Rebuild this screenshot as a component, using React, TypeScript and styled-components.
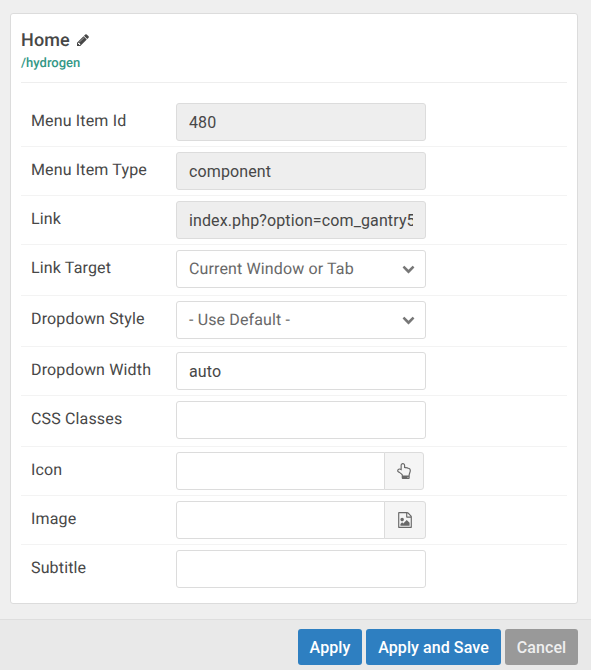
import React from "react";
import styled, { createGlobalStyle, css } from "styled-components";

const GlobalStyle = createGlobalStyle`
  *, *::before, *::after { box-sizing: border-box; }
  html, body { margin: 0; padding: 0; }
  body {
    background: #efefef;
    color: #474747;
    font-family: Roboto, "Liberation Sans", sans-serif;
    font-size: 16px;
    line-height: 24px;
    text-rendering: geometricPrecision;
  }
`;

const Modal = styled.div`
  display: flex;
  flex-direction: column;
  width: 591px;
  height: 670px;
  overflow: hidden;
`;

const Content = styled.main`
  height: 619px;
  padding: 13px 13px 0 10px;
`;

const Card = styled.section`
  height: 591px;
  padding: 0 10px;
  background: #fff;
  border: 1px solid #dcdcdc;
  border-radius: 3px;
`;

const CardHeader = styled.header`
  height: 69px;
  padding-top: 15px;
  border-bottom: 1px solid #eee;
`;

const Title = styled.h4`
  display: flex;
  align-items: center;
  gap: 6px;
  margin: 0;
  font-size: 18px;
  font-weight: 500;
  line-height: 24px;
  letter-spacing: 0.13px;
`;

const TitleEdit = styled.span`
  margin-bottom: 3px;
`;

const Path = styled.div`
  color: #349886;
  font-size: 13px;
  font-weight: 500;
  line-height: 20px;
  letter-spacing: 0;
  margin-top: 1px;
`;

const Glyph = styled.svg<{ $size: number }>`
  display: block;
  flex: none;
  width: ${(p) => p.$size}px;
  height: ${(p) => p.$size}px;
  fill: currentColor;
`;

const Form = styled.div`
  padding-top: 15px;
`;

const Row = styled.div<{ $tall?: boolean }>`
  display: flex;
  align-items: flex-start;
  height: ${(p) => (p.$tall ? 51 : 49)}px;
  padding: 5px 10px 0;
  border-bottom: 1px solid #f3f3f3;
  &:last-child { border-bottom: 0; }
`;

const Label = styled.label`
  width: 145px;
  padding-top: 6px;
  line-height: 24px;
  letter-spacing: 0.15px;
  white-space: nowrap;
`;

const control = css`
  height: 38px;
  border: 1px solid #dcdcdc;
  border-radius: 3px;
  background: #fff;
`;

const Input = styled.input`
  ${control}
  width: 250px;
  padding: 1px 12px 0;
  color: #474747;
  font: inherit;
  letter-spacing: 0.12px;
  outline: 0;
  &:disabled { background: #eee; }
`;

const Select = styled.div`
  ${control}
  display: flex;
  align-items: center;
  justify-content: space-between;
  width: 250px;
  padding: 0 10px 0 12px;
  color: #686868;
  letter-spacing: 0.13px;
`;

const Chevron = styled.span`
  color: #777;
  padding-bottom: 2px;
`;

const Group = styled.div`
  display: flex;
`;

const GroupInput = styled(Input)`
  width: 209px;
  border-radius: 3px 0 0 3px;
`;

const Addon = styled.button<{ $width: number }>`
  ${control}
  display: flex;
  align-items: center;
  justify-content: center;
  width: ${(p) => p.$width}px;
  margin-left: -1px;
  padding: 0;
  border-radius: 0 3px 3px 0;
  background: #f5f5f5;
  color: #686868;
`;

const Footer = styled.footer`
  display: flex;
  justify-content: flex-end;
  gap: 4px;
  height: 51px;
  padding: 9px 13px 0 0;
  background: #e9e9e9;
  border-top: 1px solid #dedede;
`;

const Button = styled.button<{ $width: number; $muted?: boolean }>`
  width: ${(p) => p.$width}px;
  height: 36px;
  padding: 2px 0 0;
  border: 0;
  border-radius: 3px;
  background: ${(p) => (p.$muted ? "#999" : "#2e7fc1")};
  color: ${(p) => (p.$muted ? "#efefef" : "#fff")};
  font: 500 16px/24px Roboto, "Liberation Sans", sans-serif;
  letter-spacing: 0.08px;
  white-space: nowrap;
`;

const paths = {
  pencil:
    "M491 1536l91-91-235-235-91 91v107h128v128h107zm523-928q0-22-22-22-10 0-17 7l-542 542q-7 7-7 17 0 22 22 22 10 0 17-7l542-542q7-7 7-17zm-54-192l416 416-832 832h-416v-416zm683 96q0 53-37 90l-166 166-416-416 166-165q36-38 90-38 53 0 91 38l235 234q37 39 37 91z",
  chevron:
    "M1683 808l-742 741q-19 19-45 19t-45-19l-742-741q-19-19-19-45.500t19-45.500l166-165q19-19 45-19t45 19l531 531 531-531q19-19 45-19t45 19l166 165q19 19 19 45.500t-19 45.500z",
  hand:
    "M1408 1600q0-26-19-45t-45-19-45 19-19 45 19 45 45 19 45-19 19-45zm128-764q0-189-167-189-26 0-56 5-16-30-52.500-47.500t-73.500-17.500-69 18q-50-53-119-53-25 0-55.500 10t-47.500 25v-331q0-52-38-90t-90-38q-51 0-89.500 39t-38.500 89v576q-20 0-48.500-15t-55-33-68-33-84.500-15q-67 0-97.500 44.500t-30.500 115.500q0 24 139 90 44 24 65 37 64 40 145 112 81 71 106 101 57 69 57 140v32h640v-32q0-72 32-167t64-193.500 32-179.500zm128-5q0 133-69 322-59 164-59 223v288q0 53-37.500 90.500t-90.500 37.500h-640q-53 0-90.500-37.500t-37.500-90.500v-288q0-10-4.500-21.500t-14-23.500-18-22.500-22.500-24-21.500-20.500-21.500-19-17-14q-74-65-129-100-21-13-62-33t-72-37-63-40.500-49.500-55-17.500-69.500q0-125 67-206.500t189-81.500q68 0 128 22v-374q0-104 76-180t179-76q105 0 181 75.500t76 180.500v169q62 4 119 37 21-3 43-3 101 0 178 60 139-1 219.500 85t80.500 227z",
  image:
    "M1596 380q28 28 48 76t20 88v1152q0 40-28 68t-68 28h-1344q-40 0-68-28t-28-68v-1600q0-40 28-68t68-28h896q40 0 88 20t76 48zm-444-244v376h376q-10-29-22-41l-313-313q-12-12-41-22zm384 1528v-1024h-416q-40 0-68-28t-28-68v-416h-768v1536h1280zm-128-448v320h-1024v-192l192-192 128 128 384-384zm-832-192q-80 0-136-56t-56-136 56-136 136-56 136 56 56 136-56 136-136 56z",
};

const Icon = ({ name, size }: { name: keyof typeof paths; size: number }) => (
  <Glyph $size={size} viewBox="0 0 1792 1792" aria-hidden="true">
    <path d={paths[name]} />
  </Glyph>
);

const Dropdown = ({ value }: { value: string }) => (
  <Select>
    {value}
    <Chevron>
      <Icon name="chevron" size={13} />
    </Chevron>
  </Select>
);

export default function App() {
  return (
    <>
      <GlobalStyle />
      <Modal>
        <Content>
          <Card>
            <CardHeader>
              <Title>
                Home
                <TitleEdit>
                  <Icon name="pencil" size={14} />
                </TitleEdit>
              </Title>
              <Path>/hydrogen</Path>
            </CardHeader>
            <Form>
              <Row>
                <Label>Menu Item Id</Label>
                <Input disabled defaultValue="480" />
              </Row>
              <Row>
                <Label>Menu Item Type</Label>
                <Input disabled defaultValue="component" />
              </Row>
              <Row>
                <Label>Link</Label>
                <Input disabled defaultValue="index.php?option=com_gantry5&view=custom" />
              </Row>
              <Row $tall>
                <Label>Link Target</Label>
                <Dropdown value="Current Window or Tab" />
              </Row>
              <Row $tall>
                <Label>Dropdown Style</Label>
                <Dropdown value="- Use Default -" />
              </Row>
              <Row>
                <Label>Dropdown Width</Label>
                <Input defaultValue="auto" />
              </Row>
              <Row $tall>
                <Label>CSS Classes</Label>
                <Input />
              </Row>
              <Row>
                <Label>Icon</Label>
                <Group>
                  <GroupInput />
                  <Addon $width={40} aria-label="Pick an icon">
                    <Icon name="hand" size={16} />
                  </Addon>
                </Group>
              </Row>
              <Row>
                <Label>Image</Label>
                <Group>
                  <GroupInput />
                  <Addon $width={42} aria-label="Pick an image">
                    <Icon name="image" size={16} />
                  </Addon>
                </Group>
              </Row>
              <Row>
                <Label>Subtitle</Label>
                <Input />
              </Row>
            </Form>
          </Card>
        </Content>
        <Footer>
          <Button $width={64}>Apply</Button>
          <Button $width={135}>Apply and Save</Button>
          <Button $width={73} $muted>
            Cancel
          </Button>
        </Footer>
      </Modal>
    </>
  );
}
